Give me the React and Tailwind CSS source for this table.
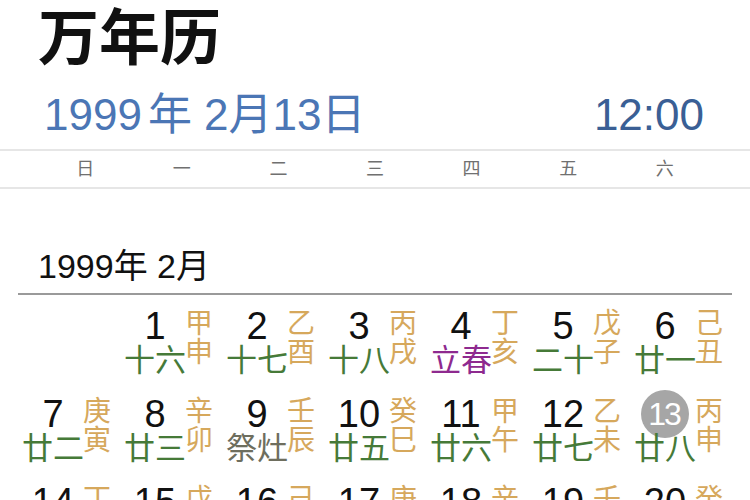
import React from 'react';

const WEEK = ['日', '一', '二', '三', '四', '五', '六'];

const LUNAR_COLOR = {
  green: 'text-[#467a38]',
  purple: 'text-[#8e2a8f]',
  gray: 'text-[#6e6e5e]',
};

const ROWS = [
  [
    null,
    { d: 1, g: '甲申', l: '十六' },
    { d: 2, g: '乙酉', l: '十七' },
    { d: 3, g: '丙戌', l: '十八' },
    { d: 4, g: '丁亥', l: '立春', c: 'purple' },
    { d: 5, g: '戊子', l: '二十' },
    { d: 6, g: '己丑', l: '廿一' },
  ],
  [
    { d: 7, g: '庚寅', l: '廿二' },
    { d: 8, g: '辛卯', l: '廿三' },
    { d: 9, g: '壬辰', l: '祭灶', c: 'gray' },
    { d: 10, g: '癸巳', l: '廿五' },
    { d: 11, g: '甲午', l: '廿六' },
    { d: 12, g: '乙未', l: '廿七' },
    { d: 13, g: '丙申', l: '廿八', today: true },
  ],
  [
    { d: 14, g: '丁酉', l: '廿九' },
    { d: 15, g: '戊戌', l: '三十' },
    { d: 16, g: '己亥', l: '春节', c: 'purple' },
    { d: 17, g: '庚子', l: '初二' },
    { d: 18, g: '辛丑', l: '初三' },
    { d: 19, g: '壬寅', l: '雨水', c: 'purple' },
    { d: 20, g: '癸卯', l: '初五' },
  ],
];

function DayCell({ c }) {
  if (!c) return <div />;
  return (
    <div className="flex pl-[5px]">
      <div className="w-[60px] flex flex-col items-center">
        <div className="h-[40px] flex items-center justify-center text-[38px] leading-[40px] text-[#111]">
          {c.today ? (
            <span className="w-[48px] h-[48px] shrink-0 rounded-full bg-[#a6a6a6] text-white flex items-center justify-center text-[32px] tracking-[-2px] pr-[2px]">
              {c.d}
            </span>
          ) : (
            c.d
          )}
        </div>
        <div className={`text-[31px] leading-[32px] -mt-[1px] whitespace-nowrap ${LUNAR_COLOR[c.c || 'green']}`}>
          {c.l}
        </div>
      </div>
      {/* 干支 vertical */}
      <div className="w-[29px] pt-[3px] flex flex-col text-[28px] leading-[29px] text-[#d6a85c]">
        <span>{c.g[0]}</span>
        <span>{c.g[1]}</span>
      </div>
    </div>
  );
}

export default function App() {
  return (
    <div className="w-[750px] h-[500px] overflow-hidden bg-white font-['Liberation_Sans','Noto_Sans_CJK_SC',sans-serif]">
      <h1 className="pl-[38px] pt-[9px] text-[61px] leading-none font-bold text-[#111]">万年历</h1>

      <div className="mt-[23px] flex items-baseline justify-between pl-[44px] pr-[46px] text-[44px] leading-none">
        <span className="text-[#4b76b5]">
          1999<span className="ml-[6px]">年</span> 2月13日
        </span>
        <span className="text-[#3a5f95]">12:00</span>
      </div>

      <div className="mt-[12px] h-[2px] bg-[#e6e6e6]" />
      <div className="grid grid-cols-7 px-[37px] h-[36px] items-center text-[18px] text-[#707070]">
        {WEEK.map((w) => (
          <span key={w} className="text-center">{w}</span>
        ))}
      </div>
      <div className="h-[2px] bg-[#e6e6e6]" />

      <div className="mt-[60px] pl-[38px] text-[34px] leading-none text-[#111]">1999年 2月</div>
      <div className="mt-[10px] mx-[18px] h-[2px] bg-[#9a9a9a]" />

      <div className="grid grid-cols-7 px-[18px] pt-[11px] gap-y-[17px]">
        {ROWS.flat().map((c, i) => (
          <DayCell key={i} c={c} />
        ))}
      </div>
    </div>
  );
}
